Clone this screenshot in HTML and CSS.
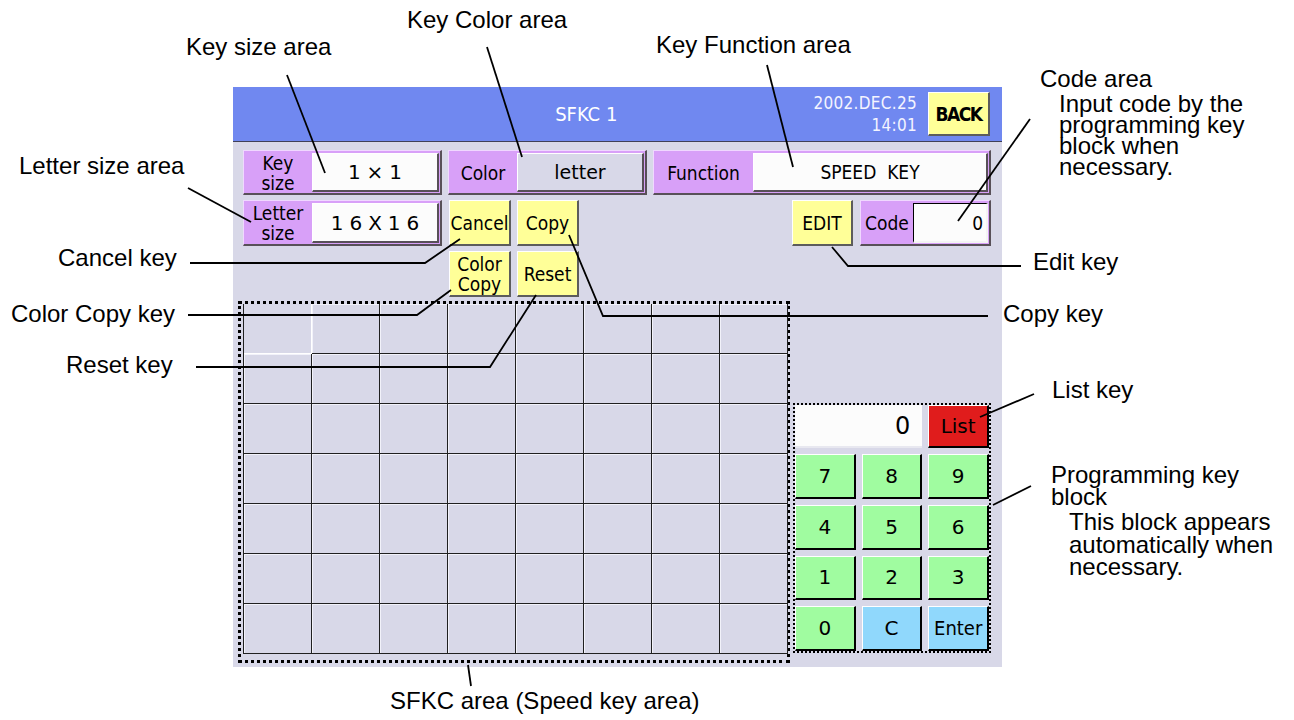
FILE: index.html
```html
<!DOCTYPE html>
<html lang="en">
<head>
    <meta charset="UTF-8">
    <meta name="viewport" content="width=device-width, initial-scale=1.0">
    <title>SFKC screen</title>
    <link rel="stylesheet" href="styles.css">
</head>
<body>
    <div class="figure">
        <!-- the terminal screen -->
        <div class="screen">
            <div class="titlebar">
                <div class="title">SFKC 1</div>
                <div class="clock">2002.DEC.25<br>14:01</div>
                <div class="key yellow back">BACK</div>
            </div>

            <div class="panel">
                <div class="row">
                    <div class="field size-field">
                        <div class="flabel stack">Key<br>size</div>
                        <div class="fvalue wide">1×1</div>
                    </div>
                    <div class="field color-field">
                        <div class="flabel">Color</div>
                        <div class="fvalue gray plain">letter</div>
                    </div>
                    <div class="field func-field">
                        <div class="flabel">Function</div>
                        <div class="fvalue">SPEED&nbsp;&nbsp;KEY</div>
                    </div>
                </div>

                <div class="row">
                    <div class="field size-field">
                        <div class="flabel stack">Letter<br>size</div>
                        <div class="fvalue wide">16X16</div>
                    </div>
                    <div class="key yellow small first">Cancel</div>
                    <div class="key yellow small">Copy</div>
                    <div class="spacer"></div>
                    <div class="key yellow small edit">EDIT</div>
                    <div class="field code-field">
                        <div class="flabel">Code</div>
                        <div class="fvalue inset">0</div>
                    </div>
                </div>

                <div class="row third">
                    <div class="key yellow small stack">Color<br>Copy</div>
                    <div class="key yellow small">Reset</div>
                </div>

                <div class="work">
                    <div class="sfkc">
                        <div class="cells">
                            <div class="cell selected"></div><div class="cell"></div><div class="cell"></div><div class="cell"></div><div class="cell"></div><div class="cell"></div><div class="cell"></div><div class="cell"></div>
                            <div class="cell"></div><div class="cell"></div><div class="cell"></div><div class="cell"></div><div class="cell"></div><div class="cell"></div><div class="cell"></div><div class="cell"></div>
                            <div class="cell"></div><div class="cell"></div><div class="cell"></div><div class="cell"></div><div class="cell"></div><div class="cell"></div><div class="cell"></div><div class="cell"></div>
                            <div class="cell"></div><div class="cell"></div><div class="cell"></div><div class="cell"></div><div class="cell"></div><div class="cell"></div><div class="cell"></div><div class="cell"></div>
                            <div class="cell"></div><div class="cell"></div><div class="cell"></div><div class="cell"></div><div class="cell"></div><div class="cell"></div><div class="cell"></div><div class="cell"></div>
                            <div class="cell"></div><div class="cell"></div><div class="cell"></div><div class="cell"></div><div class="cell"></div><div class="cell"></div><div class="cell"></div><div class="cell"></div>
                            <div class="cell"></div><div class="cell"></div><div class="cell"></div><div class="cell"></div><div class="cell"></div><div class="cell"></div><div class="cell"></div><div class="cell"></div>
                        </div>
                    </div>

                    <div class="keypad">
                        <div class="display">0</div>
                        <div class="pkey red">List</div>
                        <div class="pkey">7</div>
                        <div class="pkey">8</div>
                        <div class="pkey">9</div>
                        <div class="pkey">4</div>
                        <div class="pkey">5</div>
                        <div class="pkey">6</div>
                        <div class="pkey">1</div>
                        <div class="pkey">2</div>
                        <div class="pkey">3</div>
                        <div class="pkey">0</div>
                        <div class="pkey cyan">C</div>
                        <div class="pkey cyan narrow">Enter</div>
                    </div>
                </div>
            </div>
        </div>

        <!-- callout labels -->
        <div class="note n-keysize">Key size area</div>
        <div class="note n-color">Key Color area</div>
        <div class="note n-func">Key Function area</div>
        <div class="note n-code">Code area
            <div class="sub">Input code by the<br>programming key<br>block when<br>necessary.</div>
        </div>
        <div class="note n-letter">Letter size area</div>
        <div class="note n-cancel">Cancel key</div>
        <div class="note n-ccopy">Color Copy key</div>
        <div class="note n-reset">Reset key</div>
        <div class="note n-edit">Edit key</div>
        <div class="note n-copy">Copy key</div>
        <div class="note n-list">List key</div>
        <div class="note n-prog">Programming key<br>block
            <div class="sub2">This block appears<br>automatically when<br>necessary.</div>
        </div>
        <div class="note n-sfkc">SFKC area (Speed key area)</div>

        <svg class="leaders" width="1294" height="720" viewBox="0 0 1294 720">
            <polyline points="287,75 325,173"/>
            <polyline points="487,47 522,157"/>
            <polyline points="767,65 793,167"/>
            <polyline points="1030,119 958,221"/>
            <polyline points="188,188 251,222"/>
            <polyline points="190,263 425,263 460,239"/>
            <polyline points="188,315 417,315 451,290"/>
            <polyline points="196,367 490,367 536,295"/>
            <polyline points="569,235 603,316 988,316"/>
            <polyline points="1021,266 848,266 832,247"/>
            <polyline points="1034,394 980,417"/>
            <polyline points="1031,486 993,505"/>
            <polyline points="468,665 471,686"/>
        </svg>
    </div>
</body>
</html>
```

FILE: styles.css
```css
body {
    margin: 0;
    background-color: #fff;
}

.figure {
    position: relative;
    width: 1294px;
    height: 720px;
    overflow: hidden;
    padding-top: 87px;
    box-sizing: border-box;
}

/* ---------- screen ---------- */

.screen {
    margin-left: 233px;
    width: 769px;
    height: 580px;
    background-color: #d8d8e8;
    font-family: "DejaVu Sans Condensed", "DejaVu Sans", sans-serif;
    font-stretch: condensed;
    font-size: 19px;
    color: #000;
    overflow: hidden;
}

.titlebar {
    display: flex;
    align-items: center;
    height: 54px;
    background-color: #7088f0;
    border-bottom: 1px solid #404058;
    color: #fff;
}

.title {
    flex: 1;
    padding-left: 126px;
    text-align: center;
    font-size: 20px;
}

.clock {
    text-align: right;
    font-size: 17px;
    line-height: 22px;
    letter-spacing: 0.3px;
    color: #f4f4ff;
}

.key {
    display: flex;
    align-items: center;
    justify-content: center;
    text-align: center;
    box-sizing: border-box;
    border-style: solid;
    border-width: 1px 2px 2px 1px;
    border-color: #fff #5c5c5c #5c5c5c #fff;
}

.yellow {
    background-color: #ffff98;
}

.back {
    width: 62px;
    height: 44px;
    margin-left: 11px;
    margin-right: 12px;
    color: #000;
    font-weight: bold;
    letter-spacing: -1.5px;
    font-size: 19px;
}

.panel {
    padding: 8px 11px 0 10px;
}

.row {
    display: flex;
    gap: 6px;
    height: 46px;
    margin-bottom: 5px;
}

.row:first-child {
    height: 45px;
}

.row.third {
    margin-left: 206px;
    margin-bottom: 4px;
}

.spacer {
    flex: 1;
}

.small {
    width: 62px;
    height: 46px;
}

.first {
    margin-left: 1px;
}

.edit {
    width: 61px;
    margin-right: 1px;
}

.stack {
    line-height: 20px;
}

/* purple label + value fields */

.field {
    display: flex;
    box-sizing: border-box;
    background-color: #d8a0f8;
    border-style: solid;
    border-width: 1px 2px 2px 1px;
    border-color: #f0d8ff #585058 #585058 #f0d8ff;
    padding: 2px 1px 1px 0;
}

.size-field {
    width: 199px;
}

.color-field {
    width: 199px;
}

.func-field {
    flex: 1;
}

.code-field {
    width: 131px;
}

.flabel {
    display: flex;
    align-items: center;
    justify-content: center;
    text-align: center;
    width: 68px;
    flex-shrink: 0;
}

.func-field .flabel {
    width: 99px;
}

.code-field .flabel {
    width: 52px;
}

.fvalue {
    flex: 1;
    display: flex;
    align-items: center;
    justify-content: center;
    background-color: #fcfcfc;
    border-style: solid;
    border-width: 1px 2px 2px 1px;
    border-color: #fff #585058 #585058 #fff;
}

.fvalue.wide {
    font-family: "DejaVu Sans", sans-serif;
    font-stretch: normal;
    font-size: 20px;
    letter-spacing: 6px;
    padding-left: 6px;
}

.fvalue.plain {
    font-family: "DejaVu Sans", sans-serif;
    font-stretch: normal;
}

.fvalue.gray {
    background-color: #d8d8e8;
}

.fvalue.inset {
    justify-content: flex-end;
    padding-right: 3px;
    border-color: #000 #f4f4f4 #f4f4f4 #000;
}

/* speed key area */

.work {
    display: flex;
    align-items: flex-start;
}

.sfkc {
    margin-left: -5px;
    width: 552px;
    height: 362px;
    box-sizing: border-box;
    border: 3px dotted #000;
    padding-left: 2px;
}

.cells {
    display: grid;
    grid-template-columns: repeat(8, 68px);
    grid-template-rows: repeat(7, 50px);
    border-left: 1px solid #202020;
    width: 545px;
}

.cell {
    border-right: 1px solid #202020;
    border-bottom: 1px solid #202020;
    box-shadow: inset 1px 1px 0 #f2f2fa;
}

.cell.selected {
    border-right-color: #fff;
    border-bottom-color: #fff;
    box-shadow: none;
}

/* programming key block */

.keypad {
    margin-top: 102px;
    margin-left: 3px;
    width: 200px;
    height: 250px;
    box-sizing: border-box;
    border: 2px dotted #000;
    display: grid;
    grid-template-columns: repeat(3, 1fr);
    grid-template-rows: 43px repeat(4, 1fr);
    gap: 6px;
    font-family: "DejaVu Sans", sans-serif;
    font-stretch: normal;
    font-size: 20px;
}

.display {
    grid-column: span 2;
    display: flex;
    align-items: center;
    justify-content: flex-end;
    padding-right: 12px;
    background-color: #fcfcfc;
    font-size: 24px;
    border-bottom: 2px solid #e8e8f0;
}

.pkey {
    display: flex;
    align-items: center;
    justify-content: center;
    background-color: #a0fca0;
    border-style: solid;
    border-width: 1px 2px 2px 1px;
    border-color: #fff #000 #000 #fff;
}

.pkey.red {
    background-color: #e01c1c;
}

.pkey.cyan {
    background-color: #90d8fc;
}

.pkey.narrow {
    font-family: "DejaVu Sans Condensed", "DejaVu Sans", sans-serif;
    font-stretch: condensed;
}

/* ---------- callouts ---------- */

.note {
    position: absolute;
    font-family: "Liberation Sans", Arial, sans-serif;
    font-size: 24px;
    line-height: 24px;
    color: #000;
    white-space: nowrap;
}

.note .sub {
    margin-left: 19px;
    margin-top: 2px;
    line-height: 21px;
}

.note .sub2 {
    margin-left: 18px;
    margin-top: 3px;
    line-height: 22.5px;
}

.n-keysize { left: 186px; top: 35px; }
.n-color   { left: 407px; top: 8px; }
.n-func    { left: 656px; top: 33px; }
.n-code    { left: 1040px; top: 67px; }
.n-letter  { left: 19px; top: 154px; }
.n-cancel  { left: 58px; top: 246px; }
.n-ccopy   { left: 11px; top: 302px; }
.n-reset   { left: 66px; top: 353px; }
.n-edit    { left: 1033px; top: 250px; }
.n-copy    { left: 1003px; top: 302px; }
.n-list    { left: 1052px; top: 378px; }
.n-prog    { left: 1051px; top: 464px; line-height: 22px; }
.n-sfkc    { left: 390px; top: 689px; }

.leaders {
    position: absolute;
    left: 0;
    top: 0;
    pointer-events: none;
}

.leaders polyline {
    fill: none;
    stroke: #000;
    stroke-width: 1.8;
}
```
